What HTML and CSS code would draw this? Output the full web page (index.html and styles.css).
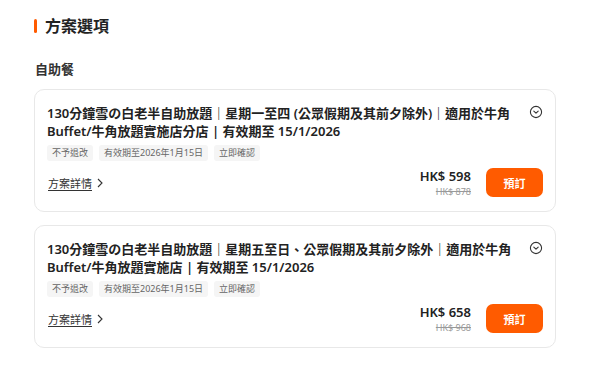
FILE: index.html
```html
<!DOCTYPE html>
<html lang="zh-Hant">
<head>
    <meta charset="UTF-8">
    <meta name="viewport" content="width=device-width, initial-scale=1.0">
    <title>方案選項</title>
    <link rel="stylesheet" href="styles.css">
</head>
<body>
    <div class="packages">
        <h2 class="section-title">方案選項</h2>
        <h3 class="group-title">自助餐</h3>

        <div class="package-card">
            <div class="package-head">
                <div class="package-name">130分鐘雪の白老半自助放題｜星期一至四 (公眾假期及其前夕除外)｜適用於牛角Buffet/牛角放題實施店分店 | 有效期至 15/1/2026</div>
                <svg class="expand-icon" width="14" height="14" viewBox="0 0 14 14">
                    <circle cx="7" cy="7" r="5.6" fill="none" stroke="#333" stroke-width="1.1"/>
                    <path d="M4.8 6.1 L7 8.2 L9.2 6.1" fill="none" stroke="#333" stroke-width="1.1" stroke-linecap="round" stroke-linejoin="round"/>
                </svg>
            </div>
            <div class="tags">
                <span class="tag">不予退改</span>
                <span class="tag">有效期至2026年1月15日</span>
                <span class="tag">立即確認</span>
            </div>
            <div class="package-foot">
                <a class="details-link" href="#">方案詳情
                    <svg width="8" height="10" viewBox="0 0 8 10"><path d="M2 1 L6 5 L2 9" fill="none" stroke="#333" stroke-width="1.1"/></svg>
                </a>
                <div class="price-box">
                    <div class="price">HK$ 598</div>
                    <div class="price-old">HK$ 878</div>
                </div>
                <button class="book-btn">預訂</button>
            </div>
        </div>

        <div class="package-card">
            <div class="package-head">
                <div class="package-name">130分鐘雪の白老半自助放題｜星期五至日、公眾假期及其前夕除外｜適用於牛角Buffet/牛角放題實施店 | 有效期至 15/1/2026</div>
                <svg class="expand-icon" width="14" height="14" viewBox="0 0 14 14">
                    <circle cx="7" cy="7" r="5.6" fill="none" stroke="#333" stroke-width="1.1"/>
                    <path d="M4.8 6.1 L7 8.2 L9.2 6.1" fill="none" stroke="#333" stroke-width="1.1" stroke-linecap="round" stroke-linejoin="round"/>
                </svg>
            </div>
            <div class="tags">
                <span class="tag">不予退改</span>
                <span class="tag">有效期至2026年1月15日</span>
                <span class="tag">立即確認</span>
            </div>
            <div class="package-foot">
                <a class="details-link" href="#">方案詳情
                    <svg width="8" height="10" viewBox="0 0 8 10"><path d="M2 1 L6 5 L2 9" fill="none" stroke="#333" stroke-width="1.1"/></svg>
                </a>
                <div class="price-box">
                    <div class="price">HK$ 658</div>
                    <div class="price-old">HK$ 968</div>
                </div>
                <button class="book-btn">預訂</button>
            </div>
        </div>
    </div>
</body>
</html>
```

FILE: styles.css
```css
body {
    margin: 0;
    background: #fff;
    font-family: "Noto Sans", "Noto Sans CJK TC", sans-serif;
    color: #222;
}
.packages {
    width: 522px;
    margin-left: 34px;
}
.section-title {
    margin: 16px 0 0;
    display: flex;
    align-items: center;
    gap: 8px;
    font-size: 16px;
    line-height: 20px;
    font-weight: 700;
    color: #222;
}
.section-title::before {
    content: "";
    width: 3px;
    height: 14px;
    border-radius: 2px;
    background: #ff5b00;
}
.group-title {
    margin: 24px 0 11px 1px;
    font-size: 13px;
    line-height: 18px;
    font-weight: 700;
    color: #333;
}
.package-card {
    border: 1px solid #e8e8e8;
    border-radius: 10px;
    padding: 14px 12px 13px 12px;
    margin-bottom: 13px;
}
.package-head {
    display: flex;
    align-items: flex-start;
    gap: 8px;
}
.package-name {
    flex: 1;
    max-width: 473px;
    font-size: 13px;
    line-height: 18px;
    font-weight: 600;
    color: #222;
}
.expand-icon {
    margin-left: auto;
    margin-top: 1px;
    flex-shrink: 0;
}
.tags {
    display: flex;
    gap: 6px;
    margin-top: 5px;
}
.tag {
    background: #f5f5f5;
    color: #666;
    font-size: 9px;
    line-height: 16px;
    padding: 0 5px;
    border-radius: 3px;
}
.package-foot {
    display: flex;
    align-items: center;
    margin-top: 6px;
}
.details-link {
    display: flex;
    align-items: center;
    gap: 4px;
    font-size: 11px;
    color: #333;
    text-decoration: underline;
    text-underline-offset: 2px;
    margin-left: 1px;
}
.price-box {
    margin-left: auto;
    text-align: right;
    display: flex;
    flex-direction: column;
    align-items: flex-end;
}
.price {
    font-size: 13px;
    line-height: 18px;
    font-weight: 600;
    color: #222;
}
.price-old {
    font-size: 9px;
    line-height: 13px;
    color: #999;
    text-decoration: line-through;
}
.book-btn {
    margin-left: 15px;
    width: 57px;
    height: 29px;
    border: none;
    border-radius: 7px;
    background: #ff5b00;
    color: #fff;
    font-family: "Noto Sans CJK TC", sans-serif;
    font-size: 11px;
    font-weight: 700;
}
```
